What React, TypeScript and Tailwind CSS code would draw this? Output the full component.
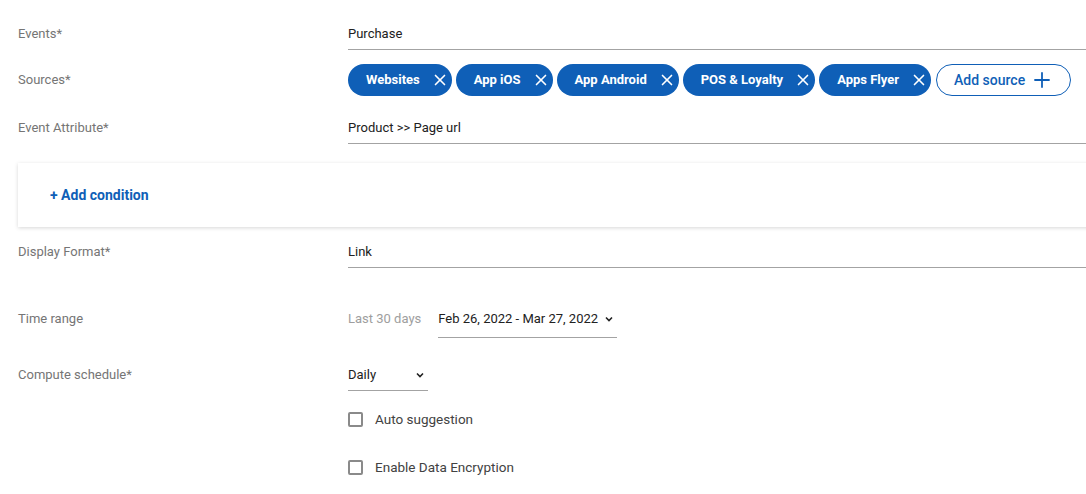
import { X, Plus } from "lucide-react";

const sources = ["Websites", "App iOS", "App Android", "POS & Loyalty", "Apps Flyer"];

function Chevron() {
  return (
    <svg width="8" height="6" viewBox="0 0 8 6" className="shrink-0">
      <path d="M1 1.5 L4 4.5 L7 1.5" fill="none" stroke="#212121" strokeWidth="1.6" />
    </svg>
  );
}

function Label({ children }: { children: React.ReactNode }) {
  return <div className="w-[348px] shrink-0 pl-[18px] text-[13px] leading-5 text-[#757575]">{children}</div>;
}

function Checkbox({ label }: { label: string }) {
  return (
    <div className="flex items-center gap-[12px] pl-[348px]">
      <span className="w-[15px] h-[15px] rounded-[2px] border-2 border-[#8a8a8a] bg-white" />
      <span className="text-[13.5px] leading-5 text-[#424242]">{label}</span>
    </div>
  );
}

export default function App() {
  return (
    <div className="w-full min-h-[494px] bg-white overflow-hidden font-['Roboto',sans-serif] text-[#212121]">
      <div className="flex items-start mt-[24px]">
        <Label>Events*</Label>
        <div className="flex-1 text-[13px] leading-5 pb-[5px] border-b border-[#a3a3a3]">Purchase</div>
      </div>

      <div className="flex items-center mt-[14px]">
        <Label>Sources*</Label>
        <div className="flex items-center gap-[4px] whitespace-nowrap">
          {sources.map((s) => (
            <div key={s} className="flex items-center h-8 rounded-full bg-[#0f5fb7] pl-[18px] pr-[3px] text-white">
              <span className="text-[13px] font-bold">{s}</span>
              <X className="ml-[11px] w-[18px] h-[18px]" strokeWidth={2.2} />
            </div>
          ))}
          <div className="flex items-center h-8 rounded-full border border-[#0f5fb7] bg-white pl-[17px] pr-[16px] text-[#0f5fb7] ml-[1px]">
            <span className="text-[14px] font-medium">Add source</span>
            <Plus className="ml-[5px] w-[24px] h-[24px]" strokeWidth={1.8} />
          </div>
        </div>
      </div>

      <div className="flex items-start mt-[22px]">
        <Label>Event Attribute*</Label>
        <div className="flex-1 text-[13px] leading-5 pb-[5px] border-b border-[#a3a3a3]">Product &gt;&gt; Page url</div>
      </div>

      <div className="ml-[18px] -mr-[20px] mt-[19px] h-[64px] flex items-center pl-[32px] bg-white shadow-[0_1px_4px_rgba(0,0,0,0.16)]">
        <span className="text-[14px] font-bold text-[#0f5fb7]">+ Add condition</span>
      </div>

      <div className="flex items-start mt-[15px]">
        <Label>Display Format*</Label>
        <div className="flex-1 text-[13px] leading-5 pb-[5px] border-b border-[#a3a3a3]">Link</div>
      </div>

      <div className="flex items-start mt-[41px]">
        <Label>Time range</Label>
        <div className="flex items-start">
          <span className="text-[13px] leading-5 text-[#9e9e9e]">Last 30 days</span>
          <div className="ml-[17px] w-[179px] flex items-center justify-between pb-[8px] border-b border-[#a3a3a3] pr-[4px]">
            <span className="text-[13px] leading-5">Feb 26, 2022 - Mar 27, 2022</span>
            <Chevron />
          </div>
        </div>
      </div>

      <div className="flex items-start mt-[27px]">
        <Label>Compute schedule*</Label>
        <div className="w-[80px] flex items-center justify-between pb-[5px] border-b border-[#a3a3a3] pr-[4px]">
          <span className="text-[13px] leading-5">Daily</span>
          <Chevron />
        </div>
      </div>

      <div className="mt-[18px]">
        <Checkbox label="Auto suggestion" />
      </div>
      <div className="mt-[28px]">
        <Checkbox label="Enable Data Encryption" />
      </div>
    </div>
  );
}
